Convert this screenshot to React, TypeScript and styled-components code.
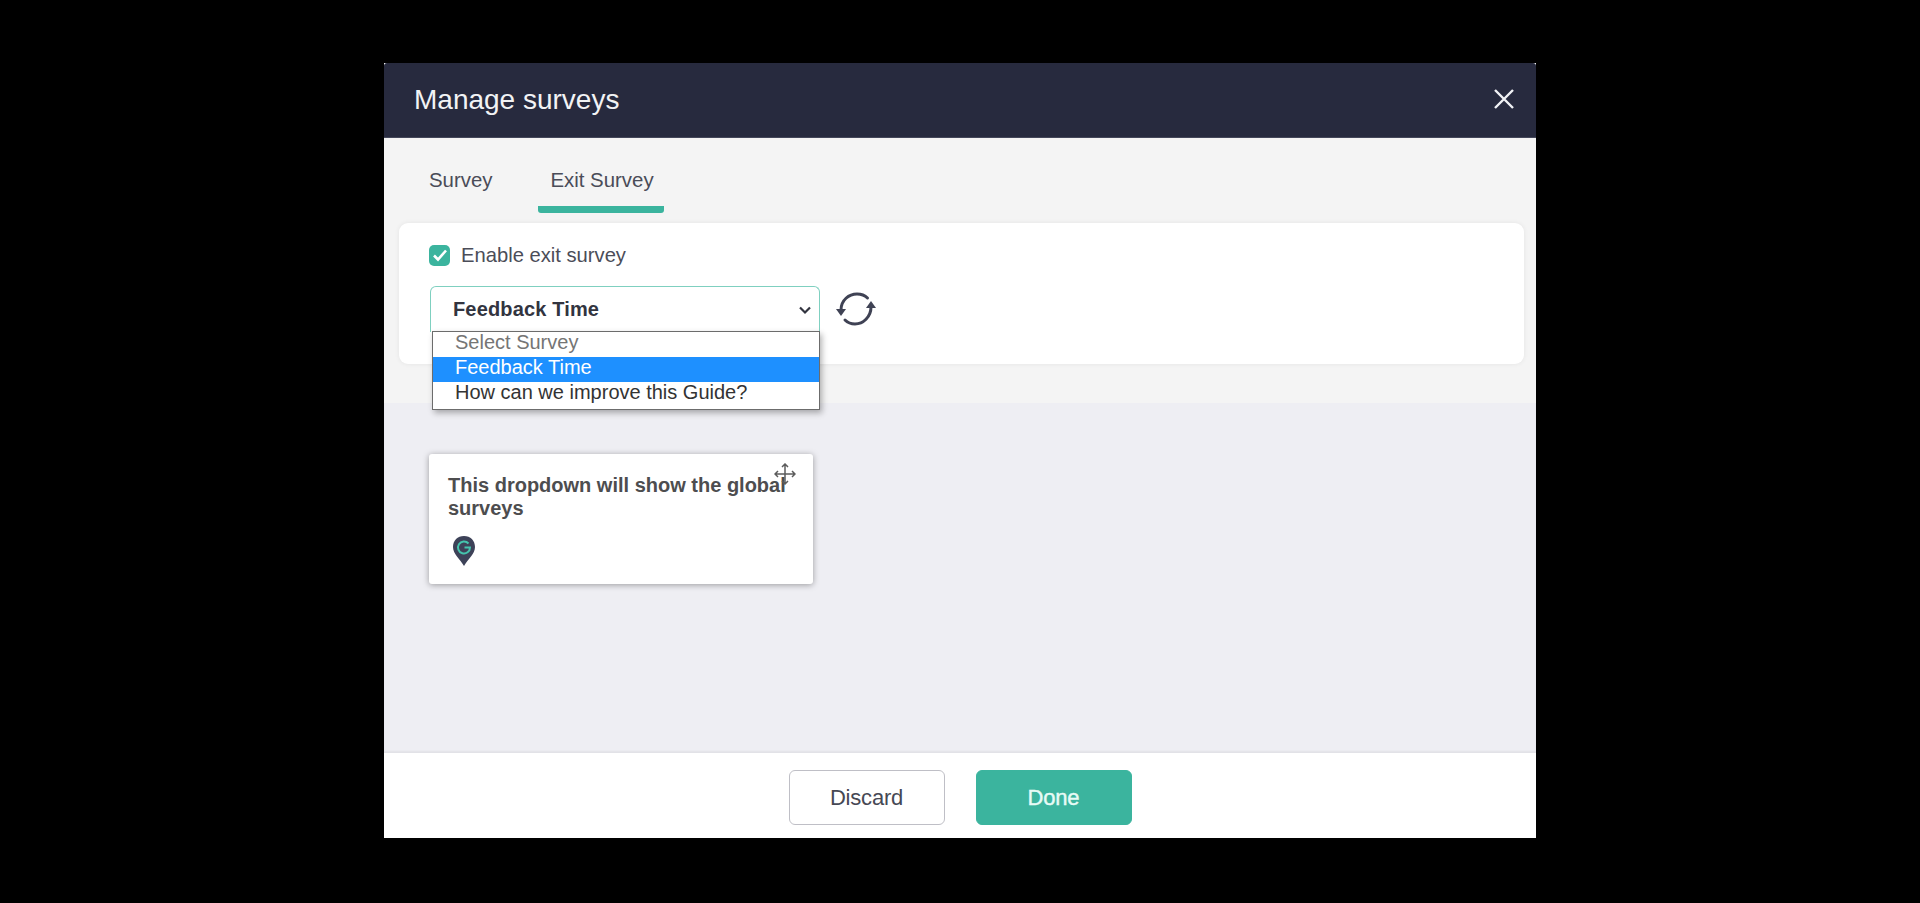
import React from "react";
import styled, { createGlobalStyle } from "styled-components";

const Global = createGlobalStyle`
  html, body { margin: 0; padding: 0; height: 100%; background: #000; }
  body { font-family: "Liberation Sans", Arial, sans-serif; }
  * { box-sizing: border-box; }
`;

const Page = styled.div`
  width: 1920px;
  height: 903px;
  background: #000;
  display: flex;
  justify-content: center;
  padding-top: 63px;
  overflow: hidden;
`;

const Modal = styled.div`
  width: 1152px;
  height: 775px;
  display: flex;
  flex-direction: column;
  background: #fff;
`;

const Header = styled.header`
  height: 75px;
  flex: none;
  background: #272a3e;
  border-top-left-radius: 3px;
  border-top-right-radius: 3px;
  border-bottom: 1px solid #44475a;
  display: flex;
  align-items: center;
  justify-content: space-between;
  padding: 0 17px 0 30px;
`;

const Title = styled.h1`
  margin: 0 0 1px;
  font-size: 28px;
  font-weight: 400;
  color: #f2f3f5;
`;

const CloseButton = styled.button`
  width: 30px;
  height: 30px;
  margin-bottom: 2px;
  padding: 0;
  border: 0;
  background: none;
  display: flex;
  align-items: center;
  justify-content: center;
`;

const TopSection = styled.section`
  height: 265px;
  flex: none;
  background: #f4f4f4;
  padding: 0 12px 0 15px;
`;

const Tabs = styled.div`
  height: 85px;
  display: flex;
  align-items: stretch;
  padding-left: 18px;
  gap: 36px;
`;

const Tab = styled.div<{ $active?: boolean }>`
  height: 75px;
  padding: 30px 10px 0 12px;
  font-size: 20.4px;
  line-height: 24px;
  color: #4a4c58;
  border-bottom: 7px solid ${(p) => (p.$active ? "#3bb49e" : "transparent")};
  border-radius: 0 0 3px 3px;
`;

const Card = styled.div`
  height: 141px;
  background: #fff;
  border-radius: 9px;
  box-shadow: 0 0 5px rgba(0, 0, 0, 0.07);
  padding: 21px 0 0 30px;
`;

const CheckRow = styled.label`
  display: flex;
  align-items: center;
  gap: 11px;
  height: 22px;
  font-size: 20.2px;
  color: #4b4d58;
`;

const CheckBox = styled.span`
  width: 21px;
  height: 21px;
  border-radius: 5px;
  background: #3bb49e;
  display: flex;
  align-items: center;
  justify-content: center;
`;

const SelectRow = styled.div`
  display: flex;
  align-items: flex-start;
  margin-top: 20px;
  margin-left: 1px;
  gap: 16px;
`;

const SelectWrap = styled.div`
  position: relative;
  width: 390px;
`;

const SelectBox = styled.div`
  height: 46px;
  border: 1px solid #7fd0c0;
  border-bottom: 0;
  border-radius: 6px 6px 0 0;
  background: #fff;
  display: flex;
  align-items: center;
  justify-content: space-between;
  padding: 0 6px 0 22px;
  font-size: 20px;
  letter-spacing: 0.15px;
  font-weight: 700;
  color: #32343f;
`;

const OptionList = styled.div`
  position: absolute;
  left: 2px;
  right: 0;
  top: 45px;
  border: 1px solid #6c6c6c;
  background: #fff;
  box-shadow: 2px 3px 6px rgba(0, 0, 0, 0.3);
  padding-bottom: 2px;
  z-index: 2;
`;

const Option = styled.div<{ $selected?: boolean; $muted?: boolean }>`
  height: 25px;
  line-height: 20px;
  padding-left: 22px;
  font-size: 20px;
  color: ${(p) => (p.$selected ? "#fff" : p.$muted ? "#757575" : "#333")};
  background: ${(p) => (p.$selected ? "#1e90ff" : "#fff")};
`;

const RefreshButton = styled.div`
  width: 40px;
  height: 40px;
  margin-top: 3px;
  display: flex;
  align-items: center;
  justify-content: center;
`;

const Canvas = styled.section`
  flex: 1;
  background: #eeeef3;
  box-shadow: inset 0 -2px 2px rgba(0, 0, 0, 0.05);
  padding: 51px 0 0 45px;
`;

const Note = styled.div`
  position: relative;
  width: 384px;
  height: 130px;
  background: #fff;
  border-radius: 3px;
  box-shadow: 0 1px 6px rgba(0, 0, 0, 0.35);
  padding: 20px 0 0 19px;
`;

const NoteText = styled.p`
  margin: 0;
  width: 350px;
  font-size: 20px;
  line-height: 23px;
  font-weight: 700;
  color: #4d4d4f;
`;

const PinWrap = styled.div`
  margin: 16px 0 0 5px;
  height: 32px;
`;

const MoveHandle = styled.div`
  position: absolute;
  right: 17px;
  top: 9px;
  width: 22px;
  height: 22px;
`;

const Footer = styled.footer`
  height: 85px;
  flex: none;
  background: #fff;
  display: flex;
  justify-content: center;
  gap: 31px;
  padding: 17px 0 13px;
`;

const Btn = styled.button<{ $primary?: boolean }>`
  width: 156px;
  height: 55px;
  border-radius: 6px;
  border: 1px solid ${(p) => (p.$primary ? "#3bb49e" : "#bfbfc6")};
  background: ${(p) => (p.$primary ? "#3bb49e" : "#fff")};
  color: ${(p) => (p.$primary ? "#e8fbf6" : "#464854")};
  font-family: inherit;
  font-size: 22px;
  letter-spacing: -0.2px;
  -webkit-text-stroke: ${(p) => (p.$primary ? "0.4px #e8fbf6" : "0")};
`;

export default function App() {
  return (
    <Page>
      <Global />
      <Modal>
        <Header>
          <Title>Manage surveys</Title>
          <CloseButton aria-label="Close">
            <svg width="24" height="24" viewBox="0 0 24 24" fill="none" stroke="#f1f2f5" strokeWidth="2.4">
              <path d="M3 3 L21 21 M21 3 L3 21" />
            </svg>
          </CloseButton>
        </Header>
        <TopSection>
          <Tabs>
            <Tab>Survey</Tab>
            <Tab $active>Exit Survey</Tab>
          </Tabs>
          <Card>
            <CheckRow>
              <CheckBox>
                <svg width="16" height="14" viewBox="0 0 16 14" fill="none" stroke="#fff" strokeWidth="2.6">
                  <path d="M2 7.5 L6 11.5 L14 2.5" />
                </svg>
              </CheckBox>
              Enable exit survey
            </CheckRow>
            <SelectRow>
              <SelectWrap>
                <SelectBox>
                  Feedback Time
                  <svg width="16" height="16" viewBox="0 0 16 16" fill="none" stroke="#32343f" strokeWidth="2.2">
                    <path d="M3 5.5 L8 10.5 L13 5.5" />
                  </svg>
                </SelectBox>
                <OptionList>
                  <Option $muted>Select Survey</Option>
                  <Option $selected>Feedback Time</Option>
                  <Option>How can we improve this Guide?</Option>
                </OptionList>
              </SelectWrap>
              <RefreshButton>
                <svg width="40" height="36" viewBox="0 0 40 36" fill="none">
                  <path d="M5 19 C5 9 13 3 21 3 C25 3 29 4.5 31.5 7" stroke="#3f4254" strokeWidth="3" strokeLinecap="round" />
                  <path d="M35 16 C35 26 27 33 19 33 C15 33 11.5 31.5 9 29" stroke="#3f4254" strokeWidth="3" strokeLinecap="round" />
                  <path d="M0 18 L10 18 L5 25 Z" fill="#3f4254" />
                  <path d="M30 17 L40 17 L35 10 Z" fill="#3f4254" />
                </svg>
              </RefreshButton>
            </SelectRow>
          </Card>
        </TopSection>
        <Canvas>
          <Note>
            <NoteText>This dropdown will show the global surveys</NoteText>
            <PinWrap>
              <svg width="22" height="30" viewBox="0 0 22 30">
                <path d="M11 0 C17.5 0 22 4.5 22 11 C22 18 15 23 11 30 C7 23 0 18 0 11 C0 4.5 4.5 0 11 0 Z" fill="#3d4258" />
                <path d="M15.5 7.5 A6 6 0 1 0 17 11.5 L11.5 11.5" fill="none" stroke="#45c4ad" strokeWidth="2" />
              </svg>
            </PinWrap>
            <MoveHandle>
              <svg width="22" height="22" viewBox="0 0 22 22" fill="none" stroke="#5c5c5c" strokeWidth="1.5">
                <path d="M11 1 V21 M1 11 H21 M8 4 L11 1 L14 4 M8 18 L11 21 L14 18 M4 8 L1 11 L4 14 M18 8 L21 11 L18 14" />
              </svg>
            </MoveHandle>
          </Note>
        </Canvas>
        <Footer>
          <Btn>Discard</Btn>
          <Btn $primary>Done</Btn>
        </Footer>
      </Modal>
    </Page>
  );
}
